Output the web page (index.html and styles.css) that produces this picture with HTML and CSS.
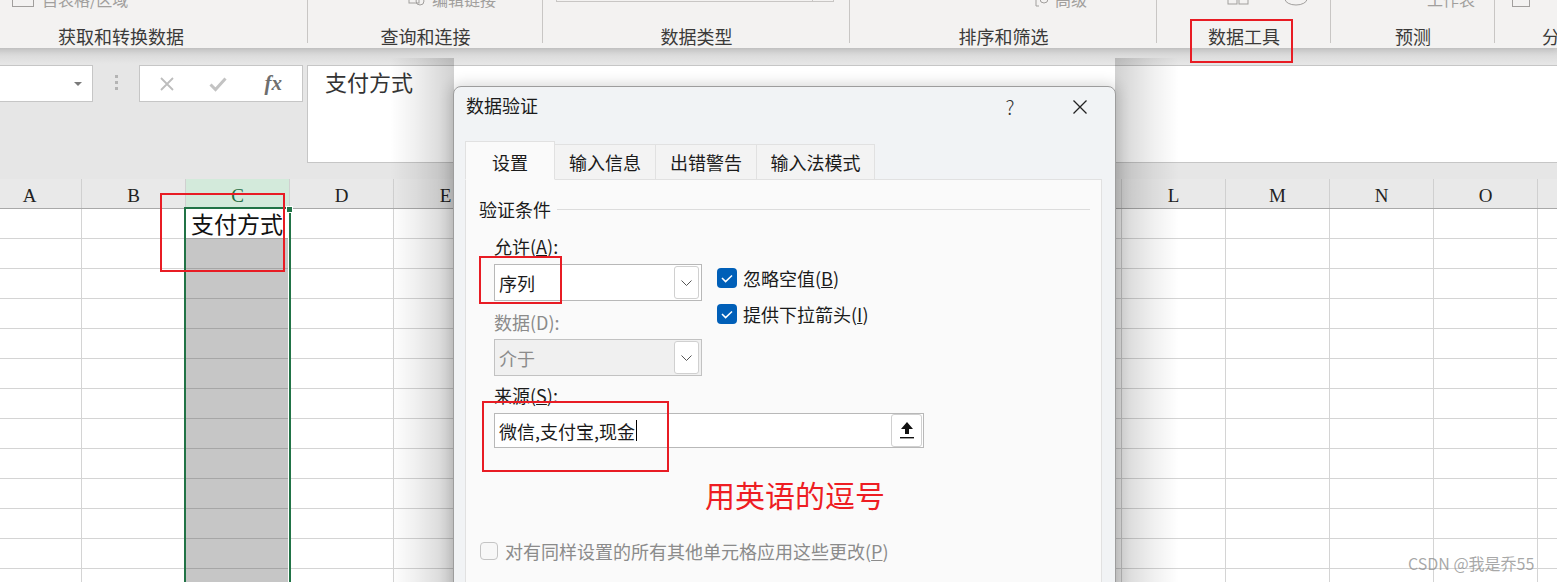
FILE: index.html
```html
<!DOCTYPE html>
<html lang="zh-CN">
<head>
    <meta charset="UTF-8">
    <meta name="viewport" content="width=device-width, initial-scale=1.0">
    <title>数据验证</title>
    <link rel="stylesheet" href="styles.css">
</head>
<body>

    <!-- Ribbon (bottom part only) -->
    <div class="ribbon">
        <div class="group g1">
            <div class="tools"><span class="tool-box"></span><span>自表格/区域</span></div>
            <div class="group-label">获取和转换数据</div>
        </div>
        <div class="group g2">
            <div class="tools">
                <svg class="tool-svg" width="18" height="16" viewBox="0 0 18 16"><rect x="1" y="2" width="10" height="10" fill="none" stroke="#a19f9d"/><circle cx="12" cy="10" r="4" fill="none" stroke="#a19f9d"/></svg>
                <span>编辑链接</span>
            </div>
            <div class="group-label">查询和连接</div>
        </div>
        <div class="group g3">
            <div class="tools"><div class="dtype"><span></span><span class="dtype-btn"></span></div></div>
            <div class="group-label">数据类型</div>
        </div>
        <div class="group g4">
            <div class="tools">
                <svg class="tool-svg" width="16" height="16" viewBox="0 0 16 16"><path d="M1 1v14h3" fill="none" stroke="#a19f9d"/><circle cx="9" cy="8" r="4" fill="none" stroke="#a19f9d"/></svg>
                <span>高级</span>
            </div>
            <div class="group-label">排序和筛选</div>
        </div>
        <div class="group g5">
            <div class="tools">
                <svg class="tool-svg" width="22" height="16" viewBox="0 0 22 16"><rect x="1" y="1" width="9" height="12" fill="none" stroke="#a19f9d"/><rect x="12" y="3" width="9" height="10" fill="none" stroke="#a19f9d"/></svg>
                <svg class="tool-svg gap" width="26" height="16" viewBox="0 0 26 16"><ellipse cx="13" cy="8" rx="11" ry="6" fill="none" stroke="#a19f9d"/></svg>
            </div>
            <div class="group-label">数据工具</div>
        </div>
        <div class="group g6">
            <div class="tools"><span>工作表</span></div>
            <div class="group-label">预测</div>
        </div>
        <div class="group g7">
            <div class="tools"><span class="tool-box small"></span></div>
            <div class="group-label">分级显示</div>
        </div>
    </div>

    <!-- Formula bar -->
    <div class="formula-bar">
        <div class="namebox"><span class="tri"></span></div>
        <div class="grip"><i></i><i></i><i></i></div>
        <div class="fx-box">
            <div class="fx-btn cancel">
                <svg width="16" height="16" viewBox="0 0 16 16"><path d="M2 2l12 12M14 2L2 14" stroke="#bdbdbd" stroke-width="1.8"/></svg>
            </div>
            <div class="fx-btn ok">
                <svg width="18" height="16" viewBox="0 0 18 16"><path d="M1.5 8.5l5 5L16.5 2.5" fill="none" stroke="#c3c3c3" stroke-width="3"/></svg>
            </div>
            <div class="fx-btn fx">fx</div>
        </div>
        <div class="formula">支付方式</div>
    </div>

    <!-- Sheet -->
    <div class="sheet">
        <div class="col-heads">
            <div class="col-head">A</div>
            <div class="col-head">B</div>
            <div class="col-head on">C</div>
            <div class="col-head">D</div>
            <div class="col-head">E</div>
            <div class="col-head">F</div>
            <div class="col-head">G</div>
            <div class="col-head">H</div>
            <div class="col-head">I</div>
            <div class="col-head">J</div>
            <div class="col-head">K</div>
            <div class="col-head">L</div>
            <div class="col-head">M</div>
            <div class="col-head">N</div>
            <div class="col-head">O</div>
            <div class="col-head">P</div>
        </div>
        <div class="cells">
            <div class="cells-left"></div>
            <div class="sel-col">
                <div class="c1">支付方式</div>
                <div class="c-rest"></div>
                <span class="fill-handle"></span>
            </div>
            <div class="cells-right"></div>
        </div>
    </div>

    <!-- red marks on the screenshot -->
    <div class="mark mark-tools"></div>
    <div class="mark mark-cell"></div>

    <!-- soft shade the dialog throws on the sheet -->
    <div class="shade shade-left"></div>
    <div class="shade shade-right"></div>

    <!-- Data validation dialog -->
    <div class="dialog">
        <div class="dlg-title">
            <h2>数据验证</h2>
            <div class="dlg-btn help">?</div>
            <div class="dlg-btn close">
                <svg width="16" height="16" viewBox="0 0 16 16"><path d="M1.5 1.5l13 13M14.5 1.5l-13 13" stroke="#222" stroke-width="1.3"/></svg>
            </div>
        </div>

        <div class="dlg-body">
            <div class="tabs">
                <div class="tab active">设置</div>
                <div class="tab">输入信息</div>
                <div class="tab">出错警告</div>
                <div class="tab wide">输入法模式</div>
            </div>

            <div class="panel">
                <div class="legend">验证条件</div>

                <div class="fields">
                    <div class="allow-row">
                        <div class="left-col">
                            <div class="label">允许(<u>A</u>):</div>
                            <div class="select">
                                <span>序列</span>
                                <span class="drop"><svg width="11" height="6" viewBox="0 0 11 6"><path d="M0.5 0.5l5 5 5-5" fill="none" stroke="#555"/></svg></span>
                            </div>
                            <div class="label off">数据(D):</div>
                            <div class="select off">
                                <span>介于</span>
                                <span class="drop"><svg width="11" height="6" viewBox="0 0 11 6"><path d="M0.5 0.5l5 5 5-5" fill="none" stroke="#555"/></svg></span>
                            </div>
                        </div>
                        <div class="right-col">
                            <div class="check">
                                <span class="box"><svg width="20" height="20" viewBox="0 0 20 20"><path d="M5 10l3.6 3.6L15 7.5" fill="none" stroke="#fff" stroke-width="1.5"/></svg></span>
                                <span>忽略空值(<u>B</u>)</span>
                            </div>
                            <div class="check">
                                <span class="box"><svg width="20" height="20" viewBox="0 0 20 20"><path d="M5 10l3.6 3.6L15 7.5" fill="none" stroke="#fff" stroke-width="1.5"/></svg></span>
                                <span>提供下拉箭头(<u>I</u>)</span>
                            </div>
                        </div>
                    </div>

                    <div class="label source-label">来源(<u>S</u>):</div>
                    <div class="source">
                        <div class="src-text">微信,支付宝,现金<span class="caret"></span></div>
                        <span class="pick">
                            <svg width="14" height="17" viewBox="0 0 14 17"><path d="M7 0L13 7H9V12H5V7H1Z" fill="#111"/><rect x="0" y="15" width="14" height="1.4" fill="#111"/></svg>
                        </span>
                    </div>

                    <div class="note">用英语的逗号</div>
                </div>

                <div class="apply-all">
                    <span class="box empty"></span>
                    <span>对有同样设置的所有其他单元格应用这些更改(<u>P</u>)</span>
                </div>
            </div>
        </div>

        <div class="mark mark-list"></div>
        <div class="mark mark-source"></div>
    </div>

    <div class="watermark">CSDN @我是乔55</div>

</body>
</html>
```

FILE: styles.css
```css
body {
    margin: 0;
    width: 1557px;
    height: 582px;
    overflow: hidden;
    position: relative;
    background-color: #ffffff;
    font-family: "Noto Sans CJK SC", "Noto Sans", sans-serif;
    color: #222;
}

/* ---------- ribbon ---------- */
.ribbon {
    display: flex;
    height: 48px;
    margin-left: -66px;
    background-color: #f3f2f1;
    position: relative;
    z-index: 1;
    box-shadow: 0 2px 6px rgba(0, 0, 0, 0.12);
    overflow: hidden;
}
.group {
    flex: none;
    display: flex;
    flex-direction: column;
    height: 48px;
    background: linear-gradient(#c8c6c4, #c8c6c4) right top / 1px 43px no-repeat;
}
.g1 { width: 374px; }
.g2 { width: 235px; }
.g3 { width: 307px; }
.g4 { width: 307px; }
.g5 { width: 174px; }
.g6 { width: 164px; }
.g7 { width: 200px; }
.group-label {
    margin-top: auto;
    text-align: center;
    font-size: 18px;
    line-height: 24px;
    color: #3b3a39;
    white-space: nowrap;
}
.g7 .group-label {
    text-align: left;
    padding-left: 47px;
}
.tools {
    display: flex;
    align-items: center;
    height: 20px;
    margin-top: -11px;
    font-size: 16px;
    line-height: 20px;
    color: #a19f9d;
    white-space: nowrap;
}
.g1 .tools { padding-left: 78px; gap: 8px; }
.g2 .tools { padding-left: 100px; gap: 6px; }
.g3 .tools { padding-left: 13px; align-items: flex-start; }
.g4 .tools { padding-left: 185px; gap: 4px; }
.g5 .tools { padding-left: 70px; }
.g5 .gap { margin-left: 34px; }
.g6 .tools { padding-left: 96px; }
.g7 .tools { padding-left: 17px; }
.tool-box {
    width: 22px;
    height: 16px;
    box-sizing: border-box;
    border: 1px solid #a19f9d;
}
.tool-box.small { width: 18px; }
.dtype {
    display: flex;
    width: 278px;
    height: 13px;
    box-sizing: border-box;
    border: 1px solid #c8c6c4;
    border-top: none;
}
.dtype span:first-child { flex: 1; }
.dtype-btn {
    width: 20px;
    border-left: 1px solid #c8c6c4;
}

/* ---------- formula bar ---------- */
.formula-bar {
    display: flex;
    align-items: flex-start;
    height: 131px;
    box-sizing: border-box;
    padding-top: 17px;
    background: linear-gradient(#d3d3d3, #e6e6e6 16px);
}
.namebox {
    display: flex;
    align-items: center;
    justify-content: flex-end;
    width: 93px;
    height: 37px;
    box-sizing: border-box;
    padding-right: 10px;
    border: 1px solid #c6c6c6;
    border-left: none;
    background-color: #fff;
}
.tri {
    width: 0;
    height: 0;
    border-left: 4px solid transparent;
    border-right: 4px solid transparent;
    border-top: 4px solid #7a7a7a;
}
.grip {
    display: flex;
    flex-direction: column;
    align-items: center;
    gap: 3px;
    width: 46px;
    padding-top: 10px;
}
.grip i {
    width: 3px;
    height: 3px;
    background-color: #b4b4b4;
}
.fx-box {
    display: flex;
    width: 164px;
    height: 37px;
    box-sizing: border-box;
    border: 1px solid #c6c6c6;
    background-color: #fff;
}
.fx-btn {
    display: flex;
    align-items: center;
    justify-content: center;
}
.fx-btn.cancel { width: 54px; }
.fx-btn.ok { width: 50px; }
.fx-btn.fx {
    width: 58px;
    font-family: "Liberation Serif", serif;
    font-style: italic;
    font-weight: bold;
    font-size: 21px;
    color: #6e6e6e;
    padding-left: 2px;
}
.formula {
    flex: 1;
    margin-left: 4px;
    height: 98px;
    box-sizing: border-box;
    padding: 0 0 0 17px;
    border: 1px solid #c6c6c6;
    border-right: none;
    background-color: #fff;
    font-size: 22px;
    line-height: 30px;
    color: #333;
}

/* ---------- sheet ---------- */
.col-heads {
    display: flex;
    margin-left: -22px;
    height: 30px;
    box-sizing: border-box;
    border-bottom: 1px solid #a9a9a9;
    background-color: #e9e9e9;
}
.col-head {
    flex: none;
    width: 104px;
    box-sizing: border-box;
    padding-top: 5px;
    border-right: 1px solid #d0d0d0;
    text-align: center;
    font-family: "Liberation Serif", serif;
    font-size: 19px;
    line-height: 24px;
    color: #222;
}
.col-head.on {
    background-color: #d3eadb;
    color: #1e6b40;
}
.cells {
    display: flex;
    height: 373px;
}
.cells-left,
.cells-right {
    background-image:
        linear-gradient(to bottom, transparent 29px, #d4d4d4 29px),
        linear-gradient(to right, transparent 103px, #d4d4d4 103px);
    background-size: 100% 30px, 104px 100%;
    background-position: 0 0, -22px 0;
}
.cells-left { width: 184px; }
.cells-right {
    flex: 1;
    background-image:
        linear-gradient(to bottom, transparent 29px, #d4d4d4 29px),
        linear-gradient(to right, transparent 102px, #d4d4d4 102px, #d4d4d4 103px, transparent 103px);
    background-position: 0 0, 0 0;
}
.sel-col {
    position: relative;
    display: flex;
    flex-direction: column;
    width: 107px;
    box-sizing: border-box;
    margin-top: -2px;
    border: 2px solid #217346;
    border-bottom: none;
}
.c1 {
    height: 29px;
    padding-left: 5px;
    background-color: #fff;
    font-size: 23px;
    line-height: 29px;
    color: #111;
    white-space: nowrap;
}
.c-rest {
    flex: 1;
    border-right: 1px solid #fff;
    background-color: #c6c6c6;
    background-image: linear-gradient(#a6a6a6 1px, transparent 1px);
    background-size: 100% 30px;
}
.fill-handle {
    position: absolute;
    top: -3px;
    right: -4px;
    width: 5px;
    height: 5px;
    background-color: #217346;
    border: 1px solid #fff;
}

/* ---------- red marks ---------- */
.mark {
    position: absolute;
    box-sizing: border-box;
    border: 2px solid #e81c24;
    z-index: 5;
}
.mark-tools { left: 1190px; top: 19px; width: 103px; height: 44px; }
.mark-cell { left: 160px; top: 193px; width: 125px; height: 79px; }
.mark-list { left: 25px; top: 169px; width: 83px; height: 48px; }
.mark-source { left: 28px; top: 314px; width: 187px; height: 71px; }

/* ---------- dialog shade ---------- */
.shade {
    position: absolute;
    top: 58px;
    width: 64px;
    height: 524px;
    z-index: 2;
}
.shade-left {
    left: 390px;
    background: linear-gradient(to right, rgba(0, 0, 0, 0), rgba(0, 0, 0, 0.06) 40%, rgba(0, 0, 0, 0.18));
}
.shade-right {
    left: 1115px;
    background: linear-gradient(to left, rgba(0, 0, 0, 0), rgba(0, 0, 0, 0.06) 40%, rgba(0, 0, 0, 0.18));
}

/* ---------- dialog ---------- */
.dialog {
    position: absolute;
    left: 453px;
    top: 86px;
    width: 663px;
    height: 530px;
    box-sizing: border-box;
    border: 1px solid #9d9d9d;
    border-radius: 8px;
    background-color: #f1f3f5;
    box-shadow: 0 0 14px 2px rgba(0, 0, 0, 0.16);
    color: #1b1b1b;
    font-size: 18px;
    z-index: 3;
}
.dlg-title {
    display: flex;
    align-items: center;
    height: 39px;
}
.dlg-title h2 {
    margin: -3px auto 0 12px;
    font-size: 18px;
    font-weight: normal;
    line-height: 24px;
}
.dlg-btn {
    display: flex;
    align-items: center;
    justify-content: center;
    width: 70px;
    height: 36px;
}
.help {
    font-size: 20px;
    font-weight: 300;
    color: #333;
}
.dlg-body {
    padding: 15px 13px 0 11px;
}
.tabs {
    display: flex;
    align-items: flex-end;
    height: 39px;
    margin-bottom: -1px;
    position: relative;
    z-index: 1;
}
.tab {
    width: 101px;
    height: 36px;
    box-sizing: border-box;
    border: 1px solid #e1e1e1;
    border-left: none;
    background-color: #f3f3f3;
    text-align: center;
    line-height: 34px;
}
.tab.active {
    width: 90px;
    height: 39px;
    padding-top: 3px;
    border-left: 1px solid #e1e1e1;
    border-bottom-color: #fafafa;
    background-color: #fafafa;
}
.tab.wide { width: 118px; }
.panel {
    height: 430px;
    padding: 17px 11px 0 13px;
    border: 1px solid #e1e1e1;
    background-color: #fafafa;
}
.legend {
    display: flex;
    align-items: center;
    line-height: 24px;
}
.legend::after {
    content: "";
    flex: 1;
    height: 1px;
    margin-left: 6px;
    background-color: #dcdcdc;
}
.fields {
    margin-top: 13px;
    padding-left: 15px;
}
.allow-row {
    display: flex;
}
.left-col {
    width: 208px;
}
.label {
    line-height: 24px;
}
.label.off {
    margin-top: 9px;
    color: #8b8b8b;
}
.select {
    display: flex;
    align-items: center;
    height: 37px;
    box-sizing: border-box;
    margin-top: 6px;
    padding: 0 2px 0 4px;
    border: 1px solid #b8b8b8;
    background-color: #fff;
}
.select span:first-child { flex: 1; }
.select.off {
    margin-top: 5px;
    border-color: #c2c2c2;
    background-color: #f0f0f0;
    color: #8b8b8b;
}
.drop {
    display: flex;
    align-items: center;
    justify-content: center;
    width: 25px;
    height: 33px;
    box-sizing: border-box;
    border: 1px solid #d0d0d0;
    border-radius: 3px;
    background-color: #fff;
}
.right-col {
    margin-left: 15px;
    padding-top: 32px;
}
.check {
    display: flex;
    align-items: center;
    gap: 6px;
    line-height: 24px;
}
.check + .check {
    margin-top: 12px;
}
.box {
    display: flex;
    width: 20px;
    height: 20px;
    border-radius: 4px;
    background-color: #005fb8;
}
.source-label {
    margin-top: 7px;
}
.source {
    display: flex;
    align-items: center;
    width: 430px;
    height: 35px;
    box-sizing: border-box;
    margin-top: 6px;
    padding: 0 1px 0 4px;
    border: 1px solid #b8b8b8;
    background-color: #fff;
}
.src-text {
    flex: 1;
    display: flex;
    align-items: center;
}
.caret {
    width: 1px;
    height: 21px;
    margin-left: 1px;
    background-color: #000;
}
.pick {
    display: flex;
    align-items: center;
    justify-content: center;
    width: 31px;
    height: 33px;
    box-sizing: border-box;
    border: 1px solid #d0d0d0;
    border-radius: 3px;
    background-color: #fff;
}
.note {
    margin-top: 28px;
    padding-left: 211px;
    font-size: 30px;
    line-height: 36px;
    color: #ee1d23;
}
.apply-all {
    display: flex;
    align-items: center;
    gap: 7px;
    margin-top: 27px;
    margin-left: 1px;
    line-height: 24px;
    color: #8b8b8b;
}
.box.empty {
    width: 18px;
    height: 18px;
    box-sizing: border-box;
    border: 1px solid #c4c4c4;
    background-color: #f7f7f7;
}

.watermark {
    position: absolute;
    left: 1408px;
    top: 552px;
    font-size: 16px;
    line-height: 22px;
    color: rgba(140, 140, 140, 0.75);
    z-index: 6;
}
```
